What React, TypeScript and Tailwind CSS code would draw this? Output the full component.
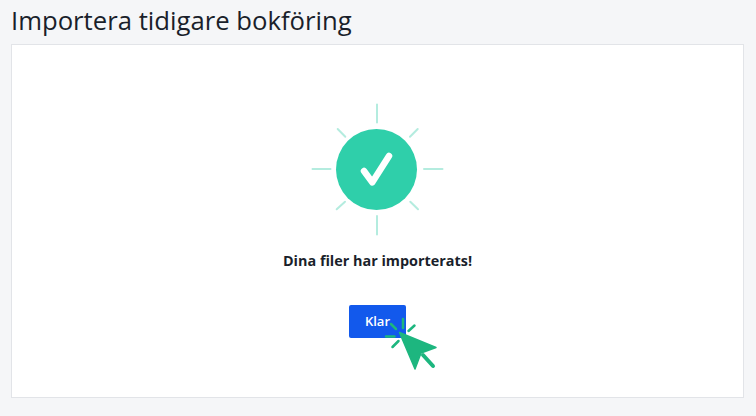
export default function App() {
  return (
    <main className="h-[416px] w-[756px] overflow-hidden bg-[#f5f6f8] px-[11px] pt-px font-['Open_Sans','Noto_Sans',sans-serif] text-[#1a1f2b]">
      <h1 className="h-[43px] text-[25.7px] leading-[40px]">Importera tidigare bokföring</h1>

      {/* Card */}
      <div className="flex h-[354px] w-[733px] flex-col items-center border border-[#e2e4e8] bg-white pt-[57px]">
        <svg width="134" height="134" viewBox="0 0 134 134" className="mr-px shrink-0">
          <g stroke="#b4ecdf" strokeWidth="2" strokeLinecap="round" fill="none">
            <path d="M67 2.500v18M67 114v18.500M2.500 67h18M114 67h18.500" />
            <path d="M27.700 27l7.600 7.700M107.700 27L100 34.700M26.700 107.300l8.300-7.600M108 107.300l-7.700-7.600" />
          </g>
          <circle cx="66.500" cy="67.500" r="40.500" fill="#2fcfaa" />
          <path d="M54 69l8.300 11.300L79 54" stroke="#fff" strokeWidth="6.500" strokeLinecap="round" strokeLinejoin="round" fill="none" />
        </svg>

        <p className="mt-[15px] text-[14.400px] leading-[20px] font-bold">Dina filer har importerats!</p>

        <button className="relative mt-[34px] h-[33px] w-[57px] rounded-[2px] bg-[#1259ec] text-[13px] font-semibold text-white">
          Klar
          <svg width="120" height="90" viewBox="0 0 120 90" className="absolute left-[-19px] top-[-15px]">
            <g stroke="#1db67f" strokeWidth="2.500" strokeLinecap="round" fill="none">
              <path d="M61 34l5 5M73 29v9M84.500 35.500l-6 5.500M56 46.500h8.500M62.500 57l6-6" />
              <path d="M93 65l10 11" strokeWidth="4" />
            </g>
            <path d="M69.500 42.500L106 57.500 91 63 85 79z" fill="#1db67f" stroke="#1db67f" strokeWidth="1.500" strokeLinejoin="round" />
          </svg>
        </button>
      </div>
    </main>
  );
}
